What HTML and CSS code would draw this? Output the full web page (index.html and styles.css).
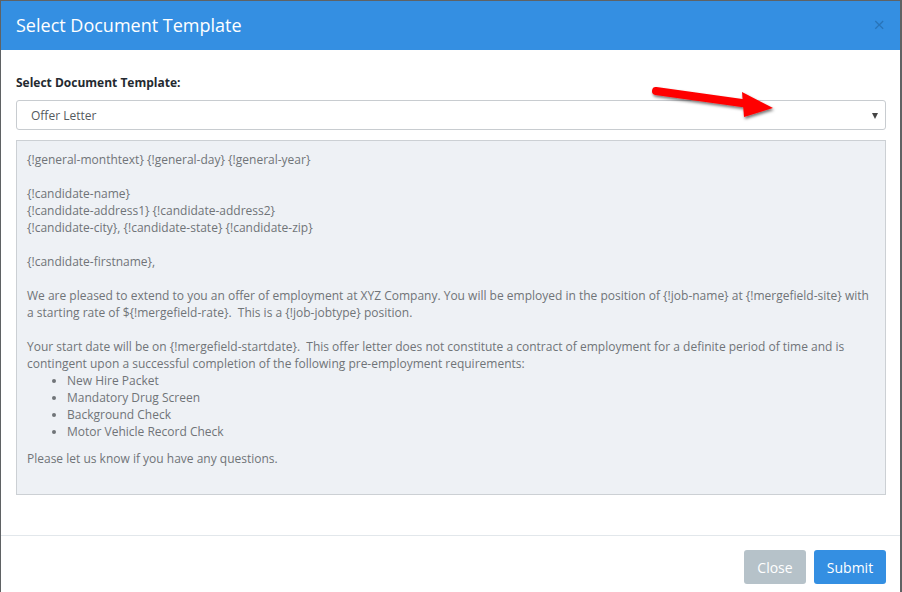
FILE: index.html
```html
<!DOCTYPE html>
<html>
<head>
<meta charset="utf-8">
<link rel="stylesheet" href="styles.css">
</head>
<body>
<div class="modal">
  <div class="modal-header">
    <h4 class="modal-title">Select Document Template</h4>
    <span class="close">&times;</span>
  </div>
  <div class="modal-body">
    <label class="label">Select Document Template:</label>
    <div class="select">
      <span>Offer Letter</span>
      <span class="caret"></span>
    </div>
    <div class="preview">
      <p>{!general-monthtext} {!general-day} {!general-year}</p>
      <p>{!candidate-name}<br>{!candidate-address1} {!candidate-address2}<br>{!candidate-city}, {!candidate-state} {!candidate-zip}</p>
      <p>{!candidate-firstname},</p>
      <p>We are pleased to extend to you an offer of employment at XYZ Company. You will be employed in the position of {!job-name} at {!mergefield-site} with a starting rate of ${!mergefield-rate}.&nbsp; This is a {!job-jobtype} position.</p>
      <p class="tight">Your start date will be on {!mergefield-startdate}.&nbsp; This offer letter does not constitute a contract of employment for a definite period of time and is contingent upon a successful completion of the following pre-employment requirements:</p>
      <ul>
        <li>New Hire Packet</li>
        <li>Mandatory Drug Screen</li>
        <li>Background Check</li>
        <li>Motor Vehicle Record Check</li>
      </ul>
      <p>Please let us know if you have any questions.</p>
    </div>
  </div>
  <div class="modal-footer">
    <button class="btn btn-close">Close</button>
    <button class="btn btn-submit">Submit</button>
  </div>
  <svg class="arrow" width="140" height="44" viewBox="0 0 140 44">
    <defs>
      <filter id="sh" x="-20%" y="-50%" width="140%" height="200%">
        <feDropShadow dx="1" dy="2" stdDeviation="1.5" flood-color="#000" flood-opacity="0.55"/>
      </filter>
    </defs>
    <g filter="url(#sh)">
      <line x1="9" y1="10" x2="102" y2="23" stroke="#f00" stroke-width="8" stroke-linecap="round"/>
      <polygon points="95,11 126,27 97,36" fill="#f00"/>
    </g>
  </svg>
</div>
</body>
</html>
```
FILE: styles.css
```css
html, body {
  margin: 0;
  padding: 0;
}
body {
  background: #5f6264;
  width: 902px;
  height: 592px;
  overflow: hidden;
  font-family: "Open Sans", "Liberation Sans", sans-serif;
}
.modal {
  position: relative;
  margin: 1px 0 0 1px;
  width: 899px;
  height: 591px;
  background: #fff;
  display: flex;
  flex-direction: column;
}
.modal-header {
  height: 49px;
  background: #348fe2;
  display: flex;
  align-items: center;
  justify-content: space-between;
  padding: 0 15px 0 15px;
  box-sizing: border-box;
}
.modal-title {
  margin: 0;
  color: #fff;
  font-size: 18px;
  font-weight: 400;
  margin-top: -2px;
}
.close {
  color: #1f5f99;
  opacity: 0.55;
  font-size: 20px;
  line-height: 20px;
  margin-top: -2px;
}
.modal-body {
  padding: 24px 14px 0 15px;
  flex: 1;
  border-bottom: 1px solid #e2e7eb;
}
.label {
  display: block;
  font-size: 12px;
  font-weight: 700;
  color: #242a30;
  line-height: 17px;
  margin-bottom: 9px;
}
.select {
  height: 30px;
  box-sizing: border-box;
  border: 1px solid #c8ccd0;
  border-radius: 3px;
  display: flex;
  align-items: center;
  justify-content: space-between;
  padding: 0 7px 0 14px;
  font-size: 12px;
  color: #555a5e;
}
.caret {
  width: 0;
  height: 0;
  border-left: 3.5px solid transparent;
  border-right: 3.5px solid transparent;
  border-top: 6px solid #444;
  margin-top: 1px;
}
.preview {
  margin-top: 10px;
  height: 355px;
  box-sizing: border-box;
  background: #eef1f5;
  border: 1px solid #ccd0d4;
  padding: 10px 10px;
  font-size: 12px;
  line-height: 17px;
  color: #707478;
}
.preview p {
  margin: 0 0 17px 0;
}
.preview p.tight {
  margin-bottom: 0;
}
.preview ul {
  margin: 0 0 10px 0;
  padding-left: 40px;
}
.modal-footer {
  height: 56px;
  display: flex;
  justify-content: flex-end;
  align-items: flex-start;
  gap: 8px;
  padding: 14px 14px 0 0;
  box-sizing: border-box;
}
.btn {
  height: 34px;
  border: none;
  border-radius: 3px;
  color: #fff;
  font-family: "Open Sans", "Liberation Sans", sans-serif;
  font-size: 14px;
  padding: 0 12px;
}
.btn-close {
  background: #b6c2c9;
  width: 62px;
}
.btn-submit {
  background: #348fe2;
  width: 72px;
}
.arrow {
  position: absolute;
  left: 646px;
  top: 80px;
}
```
